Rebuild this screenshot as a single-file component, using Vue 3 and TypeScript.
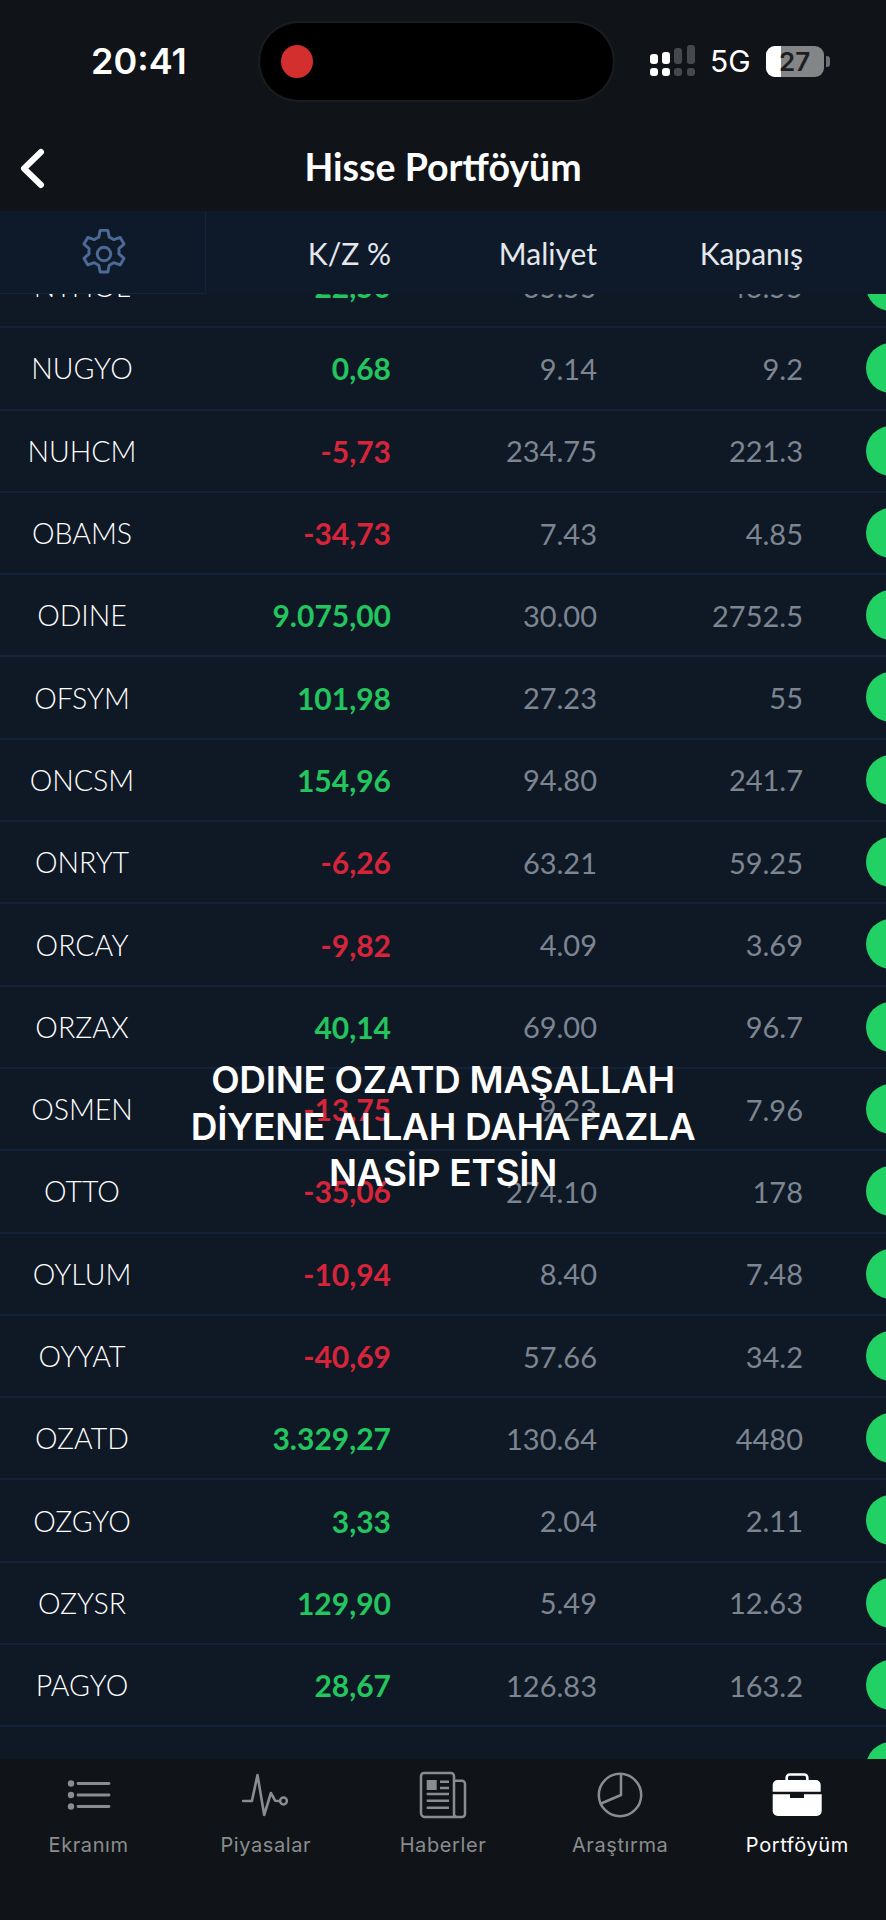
<template>
  <div class="screen">
    <div class="status">
      <span class="clock">20:41</span>
      <div class="island"><span class="rec"></span></div>
      <div class="status-right">
        <svg class="signal" width="46" height="32" viewBox="0 0 46 32">
          <rect x="0" y="9" width="8" height="10" rx="3" fill="#fff" />
          <rect x="0" y="23" width="8" height="8" rx="3" fill="#fff" />
          <rect x="12" y="7" width="8" height="12" rx="3" fill="#fff" />
          <rect x="12" y="23" width="8" height="8" rx="3" fill="#fff" />
          <rect x="24" y="3" width="8" height="16" rx="3" fill="#45484c" />
          <rect x="24" y="23" width="8" height="8" rx="3" fill="#45484c" />
          <rect x="37" y="0" width="8" height="19" rx="3" fill="#45484c" />
          <rect x="37" y="23" width="8" height="8" rx="3" fill="#45484c" />
        </svg>
        <span class="net">5G</span>
        <div class="battery">
          <div class="battery-body"><span class="battery-fill"></span><span class="battery-num">27</span></div>
          <span class="battery-tip"></span>
        </div>
      </div>
    </div>

    <div class="nav">
      <svg class="back" width="30" height="45" viewBox="0 0 30 45">
        <path d="M24 6 L7 22.500 L24 39" fill="none" stroke="#fff" stroke-width="6" stroke-linecap="round" stroke-linejoin="round" />
      </svg>
      <span class="nav-title">Hisse Portföyüm</span>
    </div>

    <div class="table-wrap">
      <div class="table-head">
        <div class="gear-cell">
          <svg width="54" height="54" viewBox="0 0 24 24" fill="none" stroke="#4d6a96" stroke-width="1.300" stroke-linejoin="round">
            <circle cx="12" cy="12" r="3" />
            <path d="M10.3 1.5h3.4l.6 3a7.7 7.7 0 0 1 2 1.15l2.9-1 1.7 2.95-2.3 2a7.700 7.700 0 0 1 0 2.300l2.300 2-1.700 2.950-2.900-1a7.700 7.700 0 0 1-2 1.150l-.6 3h-3.400l-.6-3a7.700 7.700 0 0 1-2-1.150l-2.900 1-1.700-2.950 2.300-2a7.700 7.700 0 0 1 0-2.300l-2.300-2 1.700-2.950 2.900 1a7.700 7.700 0 0 1 2-1.150z" />
          </svg>
        </div>
        <span class="col-kz">K/Z %</span>
        <span class="col-num">Maliyet</span>
        <span class="col-num">Kapanış</span>
      </div>

      <div class="rows">
        <div v-for="r in rows" :key="r.code" class="row">
          <span class="code">{{ r.code }}</span>
          <span class="kz" :class="r.kz.startsWith('-') ? 'neg' : 'pos'">{{ r.kz }}</span>
          <span class="num">{{ r.cost }}</span>
          <span class="num">{{ r.close }}</span>
          <span class="dot"></span>
        </div>
        <div class="row row-last"><span class="dot"></span></div>
      </div>

      <p class="caption">ODINE OZATD MAŞALLAH DİYENE ALLAH DAHA FAZLA NASİP ETSİN</p>
    </div>

    <div class="tabs">
      <div v-for="t in tabs" :key="t.label" class="tab" :class="{ active: t.active }">
        <svg width="60" height="60" viewBox="0 0 60 60" fill="none" stroke="#8a8c8e" stroke-width="2.500">
          <template v-if="t.icon === 'list'">
            <circle cx="12" cy="12.500" r="3.200" fill="#8a8c8e" stroke="none" />
            <circle cx="12" cy="24" r="3.200" fill="#8a8c8e" stroke="none" />
            <circle cx="12" cy="35.500" r="3.200" fill="#8a8c8e" stroke="none" />
            <path d="M19 12.500h31M19 24h31M19 35.500h31" stroke-width="2.800" stroke-linecap="round" />
          </template>
          <template v-else-if="t.icon === 'pulse'">
            <path d="M7.200 30h8.700l5.600-26 6.700 40 6.700-22 4.300 7.700 4.300.3" stroke-linejoin="round" stroke-linecap="round" stroke-width="2.600" />
            <circle cx="47.500" cy="30" r="3.400" />
          </template>
          <template v-else-if="t.icon === 'news'">
            <path d="M41 9.700h8a3 3 0 0 1 3 3V43a3 3 0 0 1-3 3H12a4 4 0 0 1-4-4V5a3 3 0 0 1 3-3h27a3 3 0 0 1 3 3v38a3 3 0 0 0 3 3" />
            <rect x="13.700" y="9" width="10" height="10" fill="#8a8c8e" stroke="none" />
            <path d="M27 10.700h9M27 17h9M13.700 23h22.300M13.700 29.700h22.300M13.700 36.700h22.300" stroke-width="2.600" />
          </template>
          <template v-else-if="t.icon === 'pie'">
            <circle cx="30" cy="24" r="21.200" />
            <path d="M31 3v21l-21 9" stroke-linejoin="round" />
          </template>
          <template v-else>
            <path d="M19.700 9V6.500a3 3 0 0 1 3-3h14.600a3 3 0 0 1 3 3V9" stroke="#fff" stroke-width="2.600" />
            <path d="M5.700 14a5 5 0 0 1 5-5h38a5 5 0 0 1 5 5v6.700H5.700z" fill="#fff" stroke="none" />
            <path d="M5.700 23.300H23V27h14v-3.700h17.700V40a5 5 0 0 1-5 5h-39a5 5 0 0 1-5-5z" fill="#fff" stroke="none" />
          </template>
        </svg>
        <span class="tab-label">{{ t.label }}</span>
      </div>
    </div>
  </div>
</template>

<script setup lang="ts">
interface Row {
  code: string
  kz: string
  cost: string
  close: string
}

interface Tab {
  label: string
  icon: string
  active?: boolean
}

const rows: Row[] = [
  { code: 'NTHOL', kz: '22,50', cost: '35.55', close: '43.55' },
  { code: 'NUGYO', kz: '0,68', cost: '9.14', close: '9.2' },
  { code: 'NUHCM', kz: '-5,73', cost: '234.75', close: '221.3' },
  { code: 'OBAMS', kz: '-34,73', cost: '7.43', close: '4.85' },
  { code: 'ODINE', kz: '9.075,00', cost: '30.00', close: '2752.5' },
  { code: 'OFSYM', kz: '101,98', cost: '27.23', close: '55' },
  { code: 'ONCSM', kz: '154,96', cost: '94.80', close: '241.7' },
  { code: 'ONRYT', kz: '-6,26', cost: '63.21', close: '59.25' },
  { code: 'ORCAY', kz: '-9,82', cost: '4.09', close: '3.69' },
  { code: 'ORZAX', kz: '40,14', cost: '69.00', close: '96.7' },
  { code: 'OSMEN', kz: '-13,75', cost: '9.23', close: '7.96' },
  { code: 'OTTO', kz: '-35,06', cost: '274.10', close: '178' },
  { code: 'OYLUM', kz: '-10,94', cost: '8.40', close: '7.48' },
  { code: 'OYYAT', kz: '-40,69', cost: '57.66', close: '34.2' },
  { code: 'OZATD', kz: '3.329,27', cost: '130.64', close: '4480' },
  { code: 'OZGYO', kz: '3,33', cost: '2.04', close: '2.11' },
  { code: 'OZYSR', kz: '129,90', cost: '5.49', close: '12.63' },
  { code: 'PAGYO', kz: '28,67', cost: '126.83', close: '163.2' },
]

const tabs: Tab[] = [
  { label: 'Ekranım', icon: 'list' },
  { label: 'Piyasalar', icon: 'pulse' },
  { label: 'Haberler', icon: 'news' },
  { label: 'Araştırma', icon: 'pie' },
  { label: 'Portföyüm', icon: 'case', active: true },
]
</script>

<style scoped>
.screen {
  width: 886px;
  height: 1920px;
  background: #101419;
  display: flex;
  flex-direction: column;
  overflow: hidden;
  font-family: 'Lato', 'Liberation Sans', sans-serif;
  color: #fff;
}

.status {
  height: 122px;
  flex: none;
  display: flex;
  align-items: center;
  padding: 0 0 0 91px;
  box-sizing: border-box;
}

.clock {
  width: 169px;
  font-family: 'Inter', sans-serif;
  font-size: 36px;
  font-weight: 600;
}

.island {
  width: 353px;
  height: 77px;
  background: #000;
  border-radius: 39px;
  box-shadow: 0 0 0 2px #1a1c20;
  display: flex;
  align-items: center;
  padding-left: 21px;
  box-sizing: border-box;
}

.rec {
  width: 32px;
  height: 33px;
  border-radius: 50%;
  background: #d32f2f;
}

.status-right {
  display: flex;
  align-items: center;
  margin-left: 37px;
}

.net {
  font-family: 'Inter', sans-serif;
  font-size: 30px;
  margin-left: 14px;
}

.battery {
  display: flex;
  align-items: center;
  margin-left: 15px;
}

.battery-body {
  width: 58px;
  height: 31px;
  border-radius: 9px;
  background: #848587;
  position: relative;
  overflow: hidden;
}

.battery-fill {
  position: absolute;
  left: 0;
  top: 0;
  bottom: 0;
  width: 15px;
  background: #fff;
}

.battery-num {
  position: relative;
  display: block;
  text-align: center;
  color: #1d1e21;
  font-family: 'Inter', sans-serif;
  font-size: 26px;
  font-weight: 600;
  line-height: 31px;
}

.battery-tip {
  width: 4px;
  height: 11px;
  margin-left: 2px;
  border-radius: 0 3px 3px 0;
  background: #6e6f72;
}

.nav {
  height: 89px;
  flex: none;
  position: relative;
  display: flex;
  align-items: center;
  justify-content: center;
}

.back {
  position: absolute;
  left: 17px;
  top: 24px;
}

.nav-title {
  font-size: 37.500px;
  font-weight: 700;
}

.table-wrap {
  flex: 1;
  min-height: 0;
  background: #0f1825;
  position: relative;
  overflow: hidden;
}

.table-head {
  position: absolute;
  z-index: 2;
  left: 0;
  right: 0;
  top: 0;
  height: 83px;
  background: #0e1a2a;
  display: flex;
  align-items: center;
  font-size: 30px;
  color: #e4e7ec;
}

.gear-cell {
  width: 206px;
  height: 83px;
  box-sizing: border-box;
  border-right: 1px solid #15243a;
  border-bottom: 1px solid #15243a;
  padding: 3px 0 0 2px;
  display: flex;
  align-items: center;
  justify-content: center;
  flex: none;
}

.col-kz {
  width: 185px;
  text-align: right;
  flex: none;
}

.col-num {
  width: 206px;
  text-align: right;
  flex: none;
}

.rows {
  margin-top: 35px;
}

.row {
  height: 82.300px;
  box-sizing: border-box;
  border-bottom: 2px solid #14233a;
  display: flex;
  align-items: center;
  position: relative;
  font-size: 29px;
}

.code {
  width: 164px;
  text-align: center;
  flex: none;
  color: #fff;
  font-size: 28.500px;
  font-weight: 300;
}

.kz {
  width: 227px;
  text-align: right;
  flex: none;
  font-size: 30px;
  font-weight: 700;
}

.pos {
  color: #22c55e;
}

.neg {
  color: #d6243a;
}

.num {
  width: 206px;
  text-align: right;
  flex: none;
  color: #7d8591;
}

.dot {
  position: absolute;
  left: 866px;
  top: 15px;
  width: 50px;
  height: 50px;
  border-radius: 50%;
  background: #22d164;
}

.caption {
  position: absolute;
  z-index: 3;
  left: 170px;
  width: 546px;
  top: 846px;
  margin: 0;
  text-align: center;
  font-family: 'Inter', sans-serif;
  font-size: 37px;
  font-weight: 600;
  line-height: 46.500px;
  letter-spacing: -0.3px;
  color: #fff;
}

.tabs {
  height: 161px;
  flex: none;
  box-sizing: border-box;
  padding-top: 12px;
  background: #101419;
  display: flex;
  position: relative;
  z-index: 4;
}

.tab {
  width: 177.200px;
  display: flex;
  flex-direction: column;
  align-items: center;
  color: #8a8c8e;
}

.tab.active {
  color: #fff;
}

.tab-label {
  margin-top: 2px;
  font-family: 'Inter', sans-serif;
  font-size: 20px;
  letter-spacing: 0.6px;
}
</style>
